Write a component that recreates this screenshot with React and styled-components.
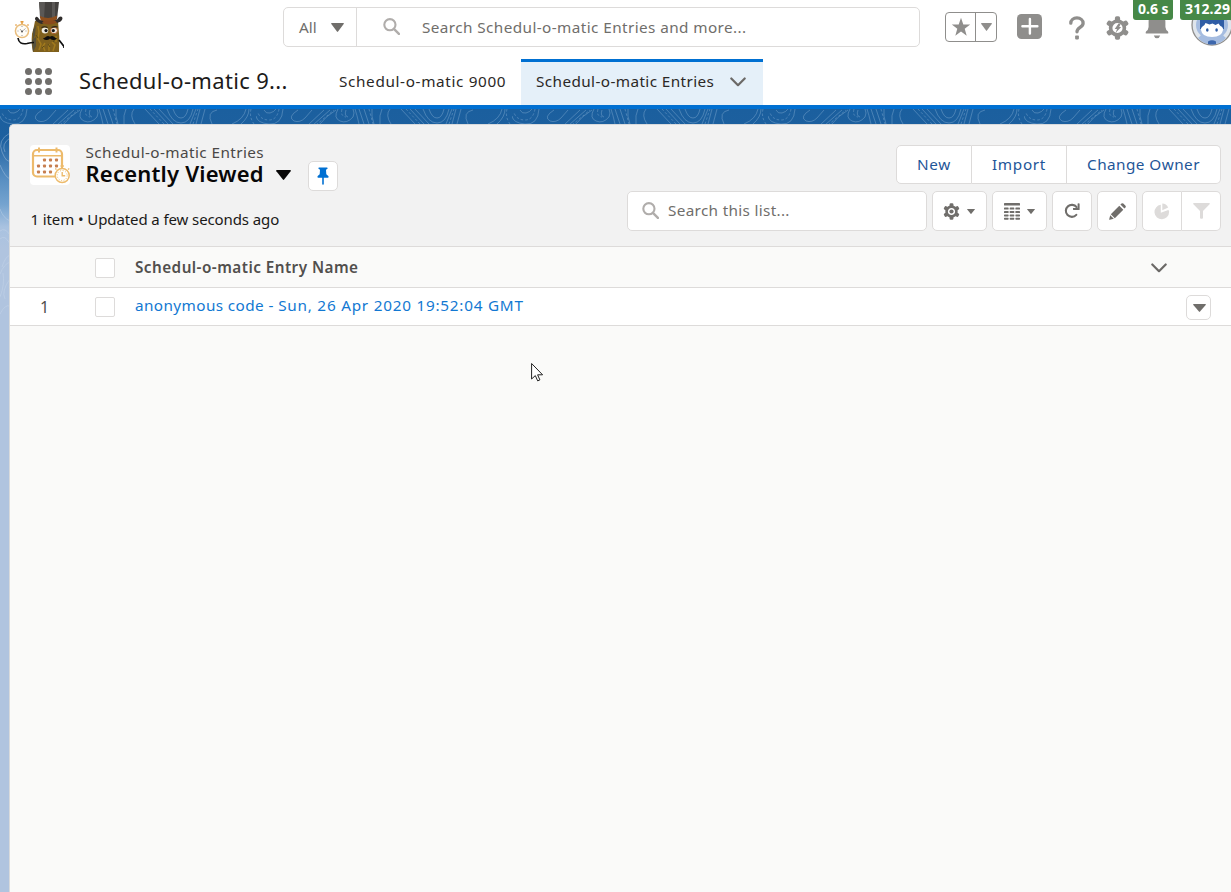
import React from "react";
import styled, { createGlobalStyle, css } from "styled-components";

const GlobalStyle = createGlobalStyle`
  *, *::before, *::after { box-sizing: border-box; }
  body { margin: 0; font-family: "Noto Sans", "Open Sans", sans-serif; overflow: hidden; }
  button { font: inherit; margin: 0; cursor: pointer; }
  svg { display: block; flex: none; }
`;

const Page = styled.div`
  position: relative;
  display: flex;
  flex-direction: column;
  width: 1231px;
  height: 892px;
  overflow: hidden;
  background: #fff;
`;

const Label = styled.span`
  display: block;
  white-space: nowrap;
  line-height: 20px;
  font-size: 15.3px;
  letter-spacing: ${(p) => p.$track || 0}px;
`;

/* Global header */
const GlobalHeader = styled.header`
  position: relative;
  display: flex;
  align-items: flex-start;
  height: 59px;
  padding-left: 14px;
  & > * { flex-shrink: 0; }
`;
const Logo = styled.div`
  width: 269px;
  padding-top: 2px;
`;
const GlobalSearch = styled.div`
  display: flex;
  width: 637px;
  height: 40px;
  margin-top: 7px;
  border: 1px solid #dddbda;
  border-radius: 5px;
  color: #706e6b;
`;
const Scope = styled.div`
  display: flex;
  align-items: center;
  gap: 14px;
  width: 73px;
  padding-left: 15px;
  border-right: 1px solid #dddbda;
`;
const SearchField = styled.div`
  display: flex;
  align-items: center;
  gap: 22px;
  padding-left: 26px;
  svg { margin-top: -2px; }
`;
const Actions = styled.div`
  display: flex;
  align-items: flex-start;
  padding: 12px 0 0 25px;
`;
const Favorites = styled.div`
  display: flex;
  width: 52px;
  height: 30px;
  border: 1px solid #8f8e8c;
  border-radius: 4px;
`;
const FavoriteHalf = styled.div`
  display: flex;
  align-items: center;
  justify-content: center;
  width: ${(p) => p.$width}px;
  & + & { border-left: 1px solid #8f8e8c; }
`;
const HeaderIcon = styled.div`
  margin-left: ${(p) => p.$gap}px;
  margin-top: ${(p) => p.$drop || 0}px;
`;
const Badge = styled.span`
  position: absolute;
  top: -2px;
  left: ${(p) => p.$left}px;
  width: ${(p) => p.$width}px;
  height: 22px;
  padding-left: 5px;
  border-radius: 3px;
  background: #468847;
  color: #fff;
  font-size: 14px;
  font-weight: 700;
  line-height: 22px;
  letter-spacing: ${(p) => p.$track || 0}px;
  white-space: nowrap;
`;

/* App navigation */
const NavBar = styled.nav`
  display: flex;
  height: 50px;
  border-bottom: 4px solid #0070d2;
  padding-left: 25px;
  color: #2b2826;
`;
const Launcher = styled.div`
  display: grid;
  grid-template-columns: repeat(3, 7px);
  grid-auto-rows: 7px;
  gap: 3px;
  width: 54px;
  margin-top: 9px;
`;
const Dot = styled.i`
  border-radius: 50%;
  background: #706e6b;
`;
const AppName = styled.h1`
  width: 245px;
  margin: 0;
  padding-top: 6px;
  color: #1d1b1a;
  font-size: 22px;
  font-weight: 400;
  line-height: 30px;
  letter-spacing: 0.34px;
  white-space: nowrap;
`;
const Tab = styled.div`
  display: flex;
  justify-content: space-between;
  width: ${(p) => (p.$active ? 242 : 197)}px;
  padding: 9px 17px 0 15px;
  border-top: 3px solid transparent;
  ${(p) =>
    p.$active &&
    css`
      border-top-color: #0070d2;
      background: #e5f0f9;
      svg { margin-top: 6px; }
    `}
`;

/* Body */
const Body = styled.div`
  position: relative;
  display: flex;
  flex: 1;
  padding: 15px 0 0 9px;
  background: linear-gradient(#1b5f9e 0, #1d609f 30px, #5a90c3 72px, #74a3cf 95px, #a9c2e0 118px, #b0c4df 140px);
`;
const Backdrop = styled.div`
  position: absolute;
  top: 0;
  left: 0;
`;
const Panel = styled.main`
  position: relative;
  display: flex;
  flex-direction: column;
  flex: 1;
  border: solid #d8dadc;
  border-width: 1px 0 0 1px;
  border-radius: 5px 0 0 0;
  overflow: hidden;
  background: #fafaf9;
`;
const ListHeader = styled.section`
  display: flex;
  justify-content: space-between;
  height: 122px;
  border-bottom: 1px solid #dddbda;
  padding: 20px 10px 0 20px;
  background: #f2f2f2;
`;
const Heading = styled.div`
  display: flex;
  flex-direction: column;
`;
const TitleRow = styled.div`
  display: flex;
  height: 64px;
`;
const Titles = styled.div`
  margin: -3px 0 0 15.5px;
`;
const ObjectName = styled(Label)`
  color: #4a4846;
`;
const ViewName = styled.h2`
  display: flex;
  align-items: center;
  gap: 12px;
  margin: 0;
  color: #080707;
  font-size: 22px;
  font-weight: 600;
  line-height: 22px;
  letter-spacing: 0.2px;
  white-space: nowrap;
  svg { margin-top: 3px; }
`;
const Status = styled(Label)`
  padding-left: 0.5px;
  color: #1a1918;
  font-size: 15px;
`;
const buttonBase = css`
  display: flex;
  align-items: center;
  justify-content: center;
  padding: 0;
  border: 1px solid #dddbda;
  border-radius: 5px;
  background: #fff;
`;
const PinButton = styled.button`
  ${buttonBase}
  width: 30px;
  height: 30px;
  margin: 16px 0 0 17.5px;
`;
const Controls = styled.div`
  display: flex;
  flex-direction: column;
  align-items: flex-end;
  gap: 7px;
`;
const ButtonGroup = styled.div`
  display: flex;
`;
const GroupButton = styled.button`
  ${buttonBase}
  width: ${(p) => p.$width}px;
  height: ${(p) => p.$height || 39}px;
  color: #1f5698;
  border-radius: 0;
  ${Label} { margin-top: -2px; }
  &:first-child { border-radius: 5px 0 0 5px; }
  &:last-child { border-radius: 0 5px 5px 0; }
  & + & { border-left: 0; }
`;
const ToolRow = styled.div`
  display: flex;
  gap: 5px;
`;
const ListSearch = styled.div`
  ${buttonBase}
  justify-content: flex-start;
  gap: 9px;
  width: 300px;
  height: 40px;
  padding: 0 0 1px 14px;
  color: #706e6b;
  ${Label} { margin-top: -2px; }
`;
const IconButton = styled.button`
  ${buttonBase}
  gap: 7px;
  width: ${(p) => (p.$menu ? 55 : 40)}px;
  height: 40px;
  padding-right: ${(p) => (p.$menu ? 1 : 0)}px;
`;
const Row = styled.div`
  display: grid;
  grid-template-columns: 85px 40px 1fr auto;
  align-items: center;
  height: ${(p) => p.$height}px;
  padding-right: ${(p) => p.$end}px;
  border-bottom: 1px solid #dddbda;
  background: ${(p) => p.$fill};
`;
const RowNumber = styled(Label)`
  padding: 1px 0 0 30px;
  color: #514f4d;
  font-size: 16px;
`;
const Checkbox = styled.i`
  width: 20px;
  height: 20px;
  margin-top: 1px;
  border: 1px solid #dddbda;
  border-radius: 2px;
  background: #fff;
`;
const ColumnName = styled(Label)`
  grid-column: 3;
  color: #514f4d;
  font-weight: 600;
`;
const EntryLink = styled(Label)`
  margin-top: -3px;
  color: #1278d2;
`;
const Timestamp = styled.span`
  letter-spacing: 0.76px;
`;
const RowMenu = styled.button`
  ${buttonBase}
  width: 25px;
  height: 25px;
  margin-top: 1px;
  padding: 1px 0 0 1px;
`;
const SortMark = styled.span`
  padding-top: 2px;
`;
const Pointer = styled.div`
  position: absolute;
  left: 531px;
  top: 363px;
`;

const Caret = ({ w = 12, h = 8, color = "#706e6b" }) => (
  <svg width={w} height={h} viewBox="0 0 12 8" preserveAspectRatio="none">
    <path d="M.6 0h10.8q.8.2.3.9L6.5 7.6q-.5.6-1 0L.3.9Q-.2.2.6 0z" fill={color} />
  </svg>
);

const Magnifier = () => (
  <svg width="17" height="17" viewBox="0 0 17 17" fill="none" stroke="#b0adab" strokeWidth="2.1">
    <circle cx="6.9" cy="6.7" r="5.6" />
    <path d="M10.9 10.9l5 5" strokeWidth="2.4" strokeLinecap="round" />
  </svg>
);

const Chevron = () => (
  <svg width="16" height="10" viewBox="0 0 16 10" fill="none" stroke="#6b6967" strokeWidth="2.2" strokeLinecap="round" strokeLinejoin="round">
    <path d="M1.3 1.5L8 8.2l6.7-6.7" />
  </svg>
);

const Potato = () => (
  <svg width="50" height="50" viewBox="0 0 50 50">
    <path d="M21 19q-1 6-3 13-1 10 1 18h26q1-15-1-31z" fill="#7f601d" />
    <path d="M19 28l3-5-1 10-2 5zM18 38l4-3v9l-3 6z" fill="#56503b" />
    <path d="M24 24l1 6-1 7 3 5-2 6M31 41l-2 3 2 5M38 40l3 3-2 6M42 34v6M35 42v7" stroke="#a27a1d" strokeWidth="1.5" fill="none" />
    <path d="M22 33l2 3M28 46l2-2M41 37l-2 3M34 42l2 3" stroke="#5e4d17" fill="none" />
    <path d="M25 0h20l-2 17-7 2-9-2z" fill="#44413f" />
    <path d="M25 0h6l-1 17-4-1zM38 0h3v17h-3z" fill="#5b5856" />
    <path d="M26 14q9 4 17-.5l-.5 5q-8 4-16 0z" fill="#8f4f1d" />
    <path d="M22 15q-2 1 0 4 4 3 6 3 2-2 8-2t7 1q4-1 5-3t0-3q-1-1-3 0l-2 2.5q-8 4-17 .5L24 15.5q-1-1-2-.5z" fill="#302d2c" />
    <path d="M28 21q8 3 15-.5l-2-2H30z" fill="#8a4a1c" />
    <ellipse cx="31" cy="28.5" rx="3.3" ry="3" fill="#eeeade" />
    <ellipse cx="40" cy="28.5" rx="3.5" ry="3.2" fill="#eeeade" stroke="#a9541f" strokeWidth=".9" />
    <circle cx="32" cy="28.6" r="1.6" fill="#151515" />
    <circle cx="39.3" cy="28.6" r="1.6" fill="#151515" />
    <path d="M27.500 25.500q3-1.500 6 0M37.500 25.500q3-1.500 6-.5" fill="none" stroke="#2b251c" strokeWidth="1.1" />
    <path d="M29 36q1.500.5 3-1.200 2-1.500 4 0 2-1.500 4 0 1.500 1.700 3 1.200-1 2.500-4 2-2-.5-3-1.500-1 1-3 1.500-3 .5-4-2z" fill="#0f0e0d" />
    <path d="M4 36q1 7 9 5.500 4-1 7-1M45 38l5 6.500V46" fill="none" stroke="#111" strokeWidth="1.7" />
    <circle cx="8" cy="29" r="6.6" fill="#fffdf8" stroke="#e9bd7c" strokeWidth="1.5" />
    <path d="M8 22v-2M6.5 19.8h3M2.5 23.5l-1-1M13.5 23.5l1-1" stroke="#e39b3d" strokeWidth="1.5" />
    <path d="M8 24v1M8 33v1M3.5 29h1M11.5 29h1" stroke="#999" />
    <path d="M8 29.5l-2-2.5M8 29.5l3.5-3" stroke="#888" fill="none" strokeWidth=".7" />
    <circle cx="8" cy="29.5" r="1" fill="#555" />
  </svg>
);

const Star = () => (
  <svg width="20" height="20" viewBox="0 0 20 20">
    <path d="M10 .8l2.300 6.700 6.900.1-5.500 4.200 2 6.900L10 14.600l-5.700 4.100 2-6.900L.8 7.600l6.900-.1z" fill="#8f8e8c" />
  </svg>
);

const Plus = () => (
  <svg width="25" height="25" viewBox="0 0 25 25">
    <rect width="25" height="25" rx="4.5" fill="#8f8e8c" />
    <path d="M12.900 5v14.500M5.400 12.300h15" stroke="#fff" strokeWidth="2.4" strokeLinecap="round" />
  </svg>
);

const Question = () => (
  <svg width="16" height="24" viewBox="0 0 16 24">
    <path d="M1.800 7.200C1.800 4.200 4.400 1.900 7.900 1.900s6.200 2.300 6.200 5.300c0 4.300-6.100 4.200-6.100 8.600" fill="none" stroke="#8f8e8c" strokeWidth="3.3" strokeLinecap="round" />
    <rect x="6.1" y="19.5" width="3.8" height="3.9" rx=".8" fill="#8f8e8c" />
  </svg>
);

const teeth = [0, 60, 120, 180, 240, 300];
const SetupGear = () => (
  <svg width="23" height="24" viewBox="-11.5 -12 23 24">
    {teeth.map((a) => (
      <rect key={a} x="-2.6" y="-11.8" width="5.2" height="6" rx="1.8" transform={`rotate(${a})`} fill="#8f8e8c" />
    ))}
    <circle r="6.9" fill="none" stroke="#8f8e8c" strokeWidth="3.6" />
    <path d="M1-4.500h2.400L1.700-1h2L-1.800 4.800-.5.900h-2.300z" fill="#8f8e8c" />
  </svg>
);

const Bell = () => (
  <svg width="24" height="27" viewBox="0 0 24 27">
    <path d="M3.600 15V9.500C3.600 4.500 7 1 12 1s8.400 3.500 8.400 8.500V15q.3 3 2.400 4.200.8.800.4 2.300H.8q-.4-1.500.4-2.300Q3.300 18 3.600 15zM8.800 23.500h6.400Q14.500 26.200 12 26.200T8.800 23.500z" fill="#8f8e8c" />
  </svg>
);

const Avatar = () => (
  <svg width="42" height="42" viewBox="0 0 42 42">
    <circle cx="21" cy="21" r="20" fill="#dfe5ec" stroke="#8f8e8c" strokeWidth="1.3" />
    <path d="M7 34q5-6 14-6t14 6q-6 6.500-14 6.500T7 34z" fill="#a5bce0" />
    <ellipse cx="21" cy="21" rx="16" ry="14.5" fill="#a5bce0" />
    <path d="M9 25V15q4-6 12-6t12 6v10z" fill="#2f5da6" />
    <path d="M10 26q-.5-2.500 1.500-3.500 2-.5 3-3.500l4 1.500 3-1 3 1.500 3-1.500q1.500 2.500 3 3 2 1 1.500 3.500-1 7-11 7T10 26z" fill="#fff" />
    <ellipse cx="16.3" cy="26" rx="1.3" ry="1.8" fill="#2f5da6" />
    <ellipse cx="25.6" cy="26" rx="1.3" ry="1.8" fill="#2f5da6" />
    <path d="M17 37.500q4-2.500 8 0v2.500q-4 1-8 0z" fill="#3c66ac" />
  </svg>
);

const calendarDays = [
  [14.5, 15], [20.5, 15], [26.5, 15],
  [8.5, 21], [14.5, 21], [20.5, 21], [26.5, 21],
  [8.5, 27], [14.5, 27], [20.5, 27],
];
const CalendarIcon = () => (
  <svg width="40" height="40" viewBox="0 0 40 40">
    <rect width="40" height="40" rx="4" fill="#fff" />
    <rect x="3" y="5" width="29" height="26.5" rx="4" fill="none" stroke="#edbb6c" strokeWidth="2.2" />
    <path d="M3 10.800h29" stroke="#edbb6c" strokeWidth="1.5" />
    <path d="M9 2.500v5M26.500 2.500v5" stroke="#edbb6c" strokeWidth="2" />
    {calendarDays.map(([x, y]) => (
      <rect key={`${x}-${y}`} x={x - 1.5} y={y - 1.5} width="3" height="3" rx=".8" fill="#c77f50" />
    ))}
    <circle cx="32.2" cy="30.5" r="7" fill="#fff" stroke="#edbb6c" strokeWidth="1.5" />
    <circle cx="32.2" cy="30.5" r="5" fill="none" stroke="#edbb6c" strokeWidth="1" strokeDasharray="1 1.6" />
    <path d="M32.200 23.500v-2.500M30.500 21h3.400M26.500 24.500l-1.300-1M38 24.500l1.300-1M32.200 27v3.700h3" stroke="#edbb6c" strokeWidth="1.4" fill="none" />
  </svg>
);

const Pin = () => (
  <svg width="12" height="18" viewBox="0 0 12 18">
    <path d="M2 .5h8q.8.2.5 1.200L9 2.800l.3 4.400 2 1.800q.8 1.500-.5 1.700H1.200Q0 10.500.7 9l2-1.800L3 2.800 1.500 1.700Q1.200.7 2 .5z" fill="#0070d2" />
    <path d="M6 10v7" stroke="#0070d2" strokeWidth="1.6" strokeLinecap="round" />
  </svg>
);

const ListGear = () => (
  <svg width="17" height="17" viewBox="-8.5 -8.5 17 17">
    {teeth.map((a) => (
      <rect key={a} x="-1.9" y="-8.3" width="3.8" height="4" rx="1.2" transform={`rotate(${a})`} fill="#706e6b" />
    ))}
    <circle r="4.9" fill="none" stroke="#706e6b" strokeWidth="2.6" />
    <circle r="2.1" fill="#706e6b" />
  </svg>
);

const Columns = () => (
  <svg width="16" height="17" viewBox="0 0 16 17" fill="#706e6b">
    <rect width="16" height="2.6" rx=".6" />
    {[4.5, 8, 11.4, 14.7].map((y) => [0, 5.7, 11.4].map((x) => <rect key={`${x}-${y}`} x={x} y={y} width="4.6" height="2" rx=".6" />))}
  </svg>
);

const Refresh = () => (
  <svg width="16" height="16" viewBox="0 0 16 16">
    <path d="M12.300 11.900A6 6 0 1 1 12.600 4.200" fill="none" stroke="#706e6b" strokeWidth="2.1" strokeLinecap="round" />
    <path d="M15.600.8v5.700q0 .5-.5.5H9.400q-.5-.2-.4-.8V5.100h4.600V.8q.1-.6 1-.6t1 .6z" fill="#706e6b" />
  </svg>
);

const Pencil = () => (
  <svg width="17" height="17" viewBox="0 0 17 17" fill="#706e6b">
    <path d="M10.300 2.700l4 4-8.500 8.500-4-4zM11.400 1.600l1.100-1.100q.9-.7 1.800 0l2.200 2.200q.7.900 0 1.800l-1.100 1.100zM1.200 12.200l3.600 3.600-4 1q-.8 0-.6-.6z" />
  </svg>
);

const Pie = () => (
  <svg width="16" height="17" viewBox="0 0 16 17" fill="#dddbda">
    <path d="M6.800 1.800v8l7.500-2.900q1 .5.800 2.200a7.300 7.300 0 1 1-8.300-7.300z" />
    <path d="M8.300.6q4 .2 5.900 4L8.300 7.200z" />
  </svg>
);

const Funnel = () => (
  <svg width="17" height="16" viewBox="0 0 17 16" fill="#dddbda">
    <path d="M.9 0h15.200q1.200.3.5 1.200L10 8v7q-.2.800-1 .8H8q-.8 0-1-.8V8L.4 1.200Q-.3.3.9 0z" />
  </svg>
);

const Contours = () => (
  <svg width="1231" height="260" viewBox="0 0 1231 260">
    <defs>
      <pattern id="contours" width="256" height="16" patternUnits="userSpaceOnUse">
        <g fill="none" stroke="#7ba6cf" strokeOpacity=".6" strokeWidth=".8">
          <path d="M8 1q2 4 6 3t6-4M27 0q-1 16-14 15-12-1-13-8M42 1q-11 7-4 11 6 2 11-3l7-8M52 16L68 1M57 16L74 1M63 16q7-9 17-15M82 0q-5 9 2 12t13-4q2-4 0-8M90 1q-2 6 2 7M99 0q2 6 4 15M103 0l5 15M108 0l5 15M118 15q-3-8-2-15M124 15q-1-9 2-15M135 15q-6-9-1-15M145 0l14 15M154 0l14 15M159 0l14 15M167 0q5 14 14 14t12-14M173 0q3 9 8 9t7-9M190 15l6-15M196 15l4-15M201 15l4-15M212 15q-6-12 5-14M232 15q12-5 14-15M241 15q8-7 8-15" />
          <path d="M23 0q-2 11-10 11T2 4M60 16L78 1M86 0q-2 7 4 8M113 0l4 15M150 0l14 15M193 15l5-15M251 0q-2 8 3 15" strokeDasharray="2.5 2" />
        </g>
      </pattern>
    </defs>
    <rect width="1231" height="16" fill="url(#contours)" />
    <g fill="none" stroke="#cfdeee" strokeOpacity=".35">
      <path d="M10 24Q-3 31 2 43t8 8M10 29Q1 35 5 43M0 56q5 12 10 14M0 100q3 9 10 12M0 122q5-4 10 4M0 130q5-5 10 5M2 158q3-10 8-12M0 165q4-10 10-12M0 188q5-13 3-24M5 190q-4-8 5-20M0 205q5-10 10-8" />
    </g>
  </svg>
);

const Arrow = () => (
  <svg width="13" height="20" viewBox="0 0 13 20">
    <path d="M.6.5V16l3.700-3.400 2.400 5.300 2.200-1-2.300-5.100h5z" fill="#fff" stroke="#222" strokeWidth="1" />
  </svg>
);

export default function App() {
  return (
    <Page>
      <GlobalStyle />
      <GlobalHeader>
        <Logo><Potato /></Logo>
        <GlobalSearch>
          <Scope>
            <Label>All</Label>
            <Caret w={13} h={9} />
          </Scope>
          <SearchField>
            <Magnifier />
            <Label $track={0.41}>Search Schedul-o-matic Entries and more...</Label>
          </SearchField>
        </GlobalSearch>
        <Actions>
          <Favorites>
            <FavoriteHalf $width={29}><Star /></FavoriteHalf>
            <FavoriteHalf $width={21}><Caret w={11} h={8} color="#8f8e8c" /></FavoriteHalf>
          </Favorites>
          <HeaderIcon $gap={20} $drop={2}><Plus /></HeaderIcon>
          <HeaderIcon $gap={27} $drop={4}><Question /></HeaderIcon>
          <HeaderIcon $gap={21} $drop={4}><SetupGear /></HeaderIcon>
          <HeaderIcon $gap={16}><Bell /></HeaderIcon>
          <HeaderIcon $gap={22} $drop={-8}><Avatar /></HeaderIcon>
        </Actions>
        <Badge $left={1133} $width={40}>0.6 s</Badge>
        <Badge $left={1180} $width={60} $track={0.2}>312.29</Badge>
      </GlobalHeader>
      <NavBar>
        <Launcher>{Array.from({ length: 9 }, (_, i) => <Dot key={i} />)}</Launcher>
        <AppName>Schedul-o-matic 9...</AppName>
        <Tab><Label $track={0.64}>Schedul-o-matic 9000</Label></Tab>
        <Tab $active><Label $track={0.4}>Schedul-o-matic Entries</Label><Chevron /></Tab>
      </NavBar>
      <Body>
        <Backdrop><Contours /></Backdrop>
        <Panel>
          <ListHeader>
            <Heading>
              <TitleRow>
                <CalendarIcon />
                <Titles>
                  <ObjectName $track={0.41}>Schedul-o-matic Entries</ObjectName>
                  <ViewName>Recently Viewed <Caret w={15} h={10} color="#080707" /></ViewName>
                </Titles>
                <PinButton><Pin /></PinButton>
              </TitleRow>
              <Status $track={-0.1}>1 item • Updated a few seconds ago</Status>
            </Heading>
            <Controls>
              <ButtonGroup>
                <GroupButton $width={76}><Label $track={0.65}>New</Label></GroupButton>
                <GroupButton $width={95}><Label $track={0.7}>Import</Label></GroupButton>
                <GroupButton $width={154}><Label $track={0.44}>Change Owner</Label></GroupButton>
              </ButtonGroup>
              <ToolRow>
                <ListSearch><Magnifier /><Label $track={0.32}>Search this list...</Label></ListSearch>
                <IconButton $menu><ListGear /><Caret w={8} h={5} /></IconButton>
                <IconButton $menu><Columns /><Caret w={8} h={5} /></IconButton>
                <IconButton><Refresh /></IconButton>
                <IconButton><Pencil /></IconButton>
                <ButtonGroup>
                  <GroupButton $width={40} $height={40}><Pie /></GroupButton>
                  <GroupButton $width={39} $height={40}><Funnel /></GroupButton>
                </ButtonGroup>
              </ToolRow>
            </Controls>
          </ListHeader>
          <Row $height={41} $end={64} $fill="#fafaf9">
            <span />
            <Checkbox />
            <ColumnName $track={0.45}>Schedul-o-matic Entry Name</ColumnName>
            <SortMark><Chevron /></SortMark>
          </Row>
          <Row $height={38} $end={20} $fill="#fff">
            <RowNumber>1</RowNumber>
            <Checkbox />
            <EntryLink $track={0.4}>anonymous code - <Timestamp>Sun, 26 Apr 2020 19:52:04 GMT</Timestamp></EntryLink>
            <RowMenu><Caret w={13} h={8} /></RowMenu>
          </Row>
        </Panel>
      </Body>
      <Pointer><Arrow /></Pointer>
    </Page>
  );
}
